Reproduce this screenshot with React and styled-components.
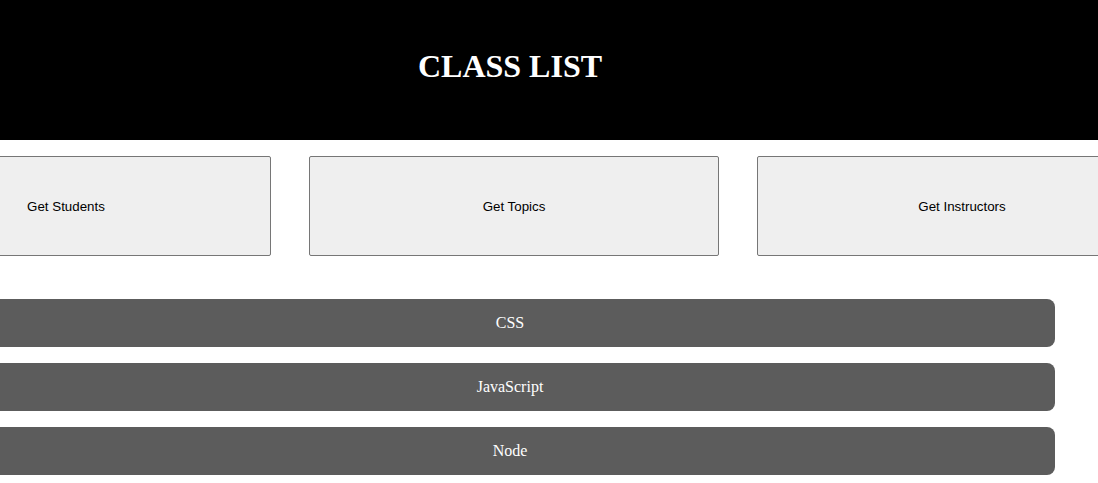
import React from "react";
import styled, { createGlobalStyle } from "styled-components";

const GlobalStyle = createGlobalStyle`
  html, body {
    margin: 0;
    padding: 0;
    background: #fff;
    overflow: hidden;
  }
  body {
    font-family: "Liberation Serif", "Times New Roman", serif;
  }
`;

// the page is scrolled a little to the right in the screenshot
const Page = styled.div`
  width: 1090px;
  margin-left: -35px;
`;

const Header = styled.header`
  height: 140px;
  background: #000;
  display: flex;
  align-items: center;
  justify-content: center;
  margin-right: -100px;
  padding-right: 100px;
`;

const Title = styled.h1`
  margin: 0 0 8px 0;
  color: #fff;
  font-size: 32px;
  font-weight: bold;
  font-family: "Liberation Serif", "Times New Roman", serif;
`;

const ButtonRow = styled.div`
  display: flex;
  justify-content: center;
  gap: 38px;
  margin-top: 16px;
  margin-left: 8px;
`;

const FetchButton = styled.button`
  flex-shrink: 0;
  width: 410px;
  height: 100px;
  background: #efefef;
  border: 1px solid #767676;
  border-radius: 2px;
  font-family: "Liberation Sans", Arial, sans-serif;
  font-size: 13.33px;
  color: #000;
  padding: 0;
`;

const List = styled.ul`
  list-style: none;
  margin: 43px 0 0 0;
  padding: 0;
  display: flex;
  flex-direction: column;
  gap: 16px;
`;

const Item = styled.li`
  height: 48px;
  border-radius: 8px;
  background: #5c5c5c;
  color: #fff;
  font-size: 16px;
  display: flex;
  align-items: center;
  justify-content: center;
`;

const topics = ["CSS", "JavaScript", "Node"];

export default function App() {
  return (
    <>
      <GlobalStyle />
      <Page>
        <Header>
          <Title>CLASS LIST</Title>
        </Header>
        <ButtonRow>
          <FetchButton>Get Students</FetchButton>
          <FetchButton>Get Topics</FetchButton>
          <FetchButton>Get Instructors</FetchButton>
        </ButtonRow>
        <List>
          {topics.map((t) => (
            <Item key={t}>{t}</Item>
          ))}
        </List>
      </Page>
    </>
  );
}
